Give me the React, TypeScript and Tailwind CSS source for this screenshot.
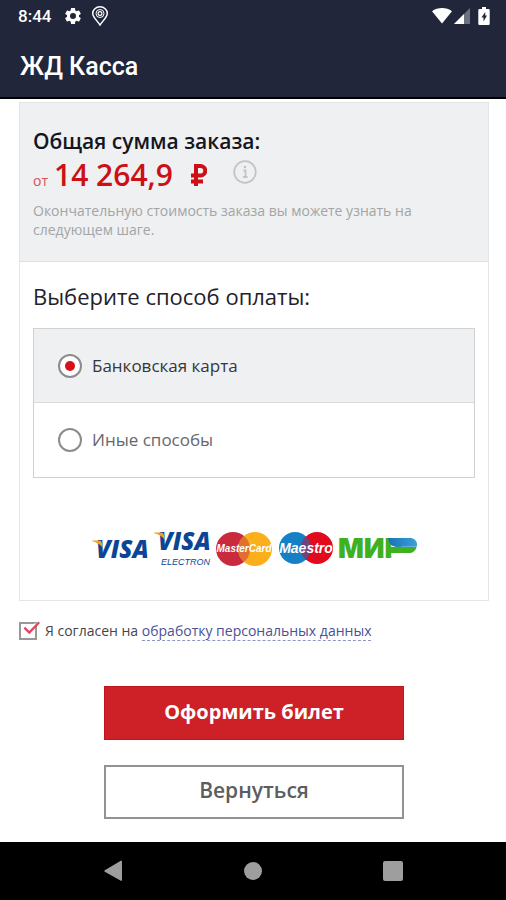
import { useState } from "react";

type PaymentMethod = "card" | "other";

const paymentMethods: Array<{ label: string; value: PaymentMethod }> = [
  { label: "Банковская карта", value: "card" },
  { label: "Иные способы", value: "other" },
];

function StatusBar() {
  return (
    <div className="flex h-8 items-center justify-between pr-4 pl-[18px] text-white">
      <div className="flex items-center">
        <span className="text-[17px] leading-5 font-medium">8:44</span>
        <svg className="ml-3 h-5 w-5" viewBox="0 0 24 24" fill="currentColor">
          <path d="M19.14 12.94c.04-.3.06-.61.06-.94 0-.32-.02-.64-.07-.94l2.03-1.58a.49.49 0 0 0 .12-.61l-1.92-3.32a.488.488 0 0 0-.59-.22l-2.39.96c-.5-.38-1.03-.7-1.62-.94l-.36-2.54a.484.484 0 0 0-.48-.41h-3.84c-.24 0-.43.17-.47.41l-.36 2.54c-.59.24-1.13.57-1.62.94l-2.39-.96c-.22-.08-.47 0-.59.22L2.74 8.87c-.12.21-.08.47.12.61l2.03 1.58c-.05.3-.09.63-.09.94s.02.64.07.94l-2.03 1.58a.49.49 0 0 0-.12.61l1.92 3.32c.12.22.37.29.59.22l2.39-.96c.5.38 1.03.7 1.62.94l.36 2.54c.05.24.24.41.48.41h3.84c.24 0 .44-.17.47-.41l.36-2.54c.59-.24 1.13-.56 1.62-.94l2.39.96c.22.08.47 0 .59-.22l1.92-3.32c.12-.22.07-.47-.12-.61l-2.01-1.58zM12 15.6A3.6 3.6 0 1 1 12 8.4a3.6 3.6 0 0 1 0 7.2z" />
        </svg>
        <svg className="ml-2 h-5 w-[18px]" viewBox="0 0 18 20" fill="none" stroke="currentColor">
          <path d="M9 19C6 14.500 1.700 11 1.700 7.400a7.300 6.600 0 0 1 14.600 0C16.300 11 12 14.500 9 19z" strokeWidth="1.500" />
          <circle cx="9" cy="7.500" r="4" strokeWidth="1" />
          <circle cx="9" cy="7.500" r="1.900" strokeWidth="1.200" />
        </svg>
      </div>

      <div className="flex items-center">
        <svg className="h-4 w-5" viewBox="0 0 20 16" fill="currentColor">
          <path d="M0 3.200C5.500-1 14.500-1 20 3.200L10 15.500z" />
        </svg>
        <svg className="ml-0.5 h-4 w-4" viewBox="0 0 16 16" fill="currentColor">
          <path d="M16 0v16H0z" opacity="0.35" />
          <path d="M10 6v10H0z" />
        </svg>
        <svg className="ml-2 h-[18px] w-3" viewBox="0 0 12 18">
          <path d="M4 0h4v2h2.500a1.200 1.200 0 0 1 1.200 1.200v13.600a1.200 1.200 0 0 1-1.200 1.200h-9A1.200 1.200 0 0 1 .3 16.800V3.200A1.200 1.200 0 0 1 1.500 2H4z" fill="white" />
          <path d="M7.200 5L3.500 10.500h2v4l3.500-6H7.200z" fill="#21263a" />
        </svg>
      </div>
    </div>
  );
}

function InfoIcon() {
  return (
    <svg className="h-6 w-6" viewBox="0 0 24 24" fill="none" stroke="#c3c4c5">
      <circle cx="12" cy="12" r="10.800" strokeWidth="1.800" />
      <path d="M10.500 10.500h2V17M10 17h4.500" strokeWidth="1.800" />
      <circle cx="12" cy="7" r="1.300" fill="#c3c4c5" stroke="none" />
    </svg>
  );
}

function PaymentLogos() {
  return (
    <div className="flex items-center justify-center gap-1.5 pl-1">
      <svg className="h-10 w-14 overflow-visible" viewBox="0 0 56 40" fontFamily="Open Sans, sans-serif" fontStyle="italic">
        <text x="4" y="29" fontSize="24" fontWeight="800" fill="#0b4595">VISA</text>
        <path d="M0 11.500h7c1.800 0 2.500.8 2.800 2.400l1 5C8.500 15.500 5 13.500 0 12z" fill="#f0a21c" />
      </svg>
      <svg className="h-10 w-14 overflow-visible" viewBox="0 0 56 40" fontFamily="Open Sans, sans-serif" fontStyle="italic">
        <text x="4" y="21" fontSize="24" fontWeight="800" fill="#0b4595">VISA</text>
        <path d="M0 3.500h7c1.800 0 2.500.8 2.800 2.400l1 5C8.500 7.500 5 5.500 0 4z" fill="#f0a21c" />
        <text x="7" y="36" fontSize="9" fontFamily="Liberation Sans, sans-serif" fill="#0b4595">ELECTRON</text>
      </svg>
      <svg className="h-10 w-14 overflow-visible" viewBox="0 0 56 40" fontFamily="Liberation Sans, sans-serif">
        <circle cx="17" cy="20" r="17" fill="#c92b3c" />
        <circle cx="39" cy="20" r="17" fill="#fbb01b" />
        <path d="M28 7a17 17 0 0 1 0 26 17 17 0 0 1 0-26z" fill="#e0702c" />
        <text x="28" y="23" textAnchor="middle" fontSize="10" fontWeight="700" fontStyle="italic" fill="white">MasterCard</text>
      </svg>
      <svg className="h-10 w-14 overflow-visible" viewBox="0 0 56 40" fontFamily="Liberation Sans, sans-serif">
        <circle cx="17" cy="19" r="16" fill="#1580c4" />
        <circle cx="39" cy="19" r="16" fill="#e20a1c" />
        <path d="M28 7.400a16 16 0 0 1 0 23.200 16 16 0 0 1 0-23.200z" fill="#6a4582" />
        <text x="28" y="24" textAnchor="middle" fontSize="14" fontWeight="700" fontStyle="italic" fill="white">Maestro</text>
      </svg>
      <svg className="h-10 w-20 overflow-visible" viewBox="0 0 80 40" fontFamily="Inter, sans-serif">
        <defs>
          <linearGradient id="mir" x1="0" x2="1">
            <stop offset="0" stopColor="#1573b8" />
            <stop offset="1" stopColor="#3f9fd8" />
          </linearGradient>
        </defs>
        <text x="-2" y="29" fontSize="27" fontWeight="900" fill="#3fb020">МИР</text>
        <path d="M50 18h26.500c-1 4.200-3.800 6-7.500 6H50z" fill="#3fb020" />
        <path d="M48 9h21.500c4.500 0 7.500 2.500 7.500 6.500 0 .9 0 1.500-.3 2.200H56c-4.500 0-7-3.200-8-8.700z" fill="url(#mir)" />
      </svg>
    </div>
  );
}

function NavigationBar() {
  return (
    <nav className="flex h-[58px] items-center justify-center gap-[100px] bg-black text-[#9e9e9e]">
      <button type="button" aria-label="Назад" className="flex w-10 justify-center">
        <svg className="h-6 w-6" viewBox="0 0 24 24" fill="currentColor">
          <path d="M21 2.500v18.500a.8.800 0 0 1-1.200.700L3.800 12.700a.9.900 0 0 1 0-1.500L19.800 1.800A.8.800 0 0 1 21 2.500z" />
        </svg>
      </button>
      <button type="button" aria-label="Домой" className="flex w-10 justify-center">
        <span className="h-[18px] w-[18px] rounded-full bg-current" />
      </button>
      <button type="button" aria-label="Обзор" className="flex w-10 justify-center">
        <span className="h-5 w-5 rounded-xs bg-current" />
      </button>
    </nav>
  );
}

export default function App() {
  const [method, setMethod] = useState<PaymentMethod>("card");
  const [agreed, setAgreed] = useState(true);

  return (
    <div className="flex min-h-screen flex-col bg-white font-['Open_Sans','Noto_Sans',sans-serif]">
      <header className="border-b-2 border-black bg-[#21263a] font-[Roboto,sans-serif]">
        <StatusBar />
        <h1 className="px-5 pt-5 pb-[15px] text-[25px] leading-[30px] font-medium text-white">ЖД Касса</h1>
      </header>

      <main className="flex-1 pt-[3px] pr-[17px] pl-[19px]">
        <section className="border border-[#e3e5e6]">
          <div className="border-b border-[#dddfe0] bg-[#eef0f1] px-[13px] pt-6 pb-[22px]">
            <h2 className="text-[21px] leading-7 font-semibold text-[#15151f]">Общая сумма заказа:</h2>
            <div className="flex items-center">
              <p className="flex items-baseline leading-10 text-[#cc1016]">
                <span className="text-sm text-[#d9525a]">от</span>
                <span className="ml-1.5 text-[30px] font-semibold">14 264,9</span>
                <svg className="ml-[18px] h-[22px] w-4" viewBox="0 0 16 22" fill="none" stroke="currentColor" strokeWidth="4">
                  <path d="M5 22V2h4.500a4.500 4.500 0 0 1 0 9.500H0M0 17.500h12" />
                </svg>
              </p>
              <button type="button" aria-label="Подробнее" className="mb-1.5 ml-[26px]">
                <InfoIcon />
              </button>
            </div>
            <p className="mt-1.5 text-sm leading-[19px] text-[#a3a5a6]">
              Окончательную стоимость заказа вы можете узнать на следующем шаге.
            </p>
          </div>

          <div className="px-[13px] pt-5 pb-[31px]">
            <h2 className="text-[22px] leading-7 text-[#22222c]">Выберите способ оплаты:</h2>
            <div className="mt-[18px] border border-[#cfd1d2]" role="radiogroup" aria-label="Выберите способ оплаты">
              {paymentMethods.map((item) => (
                <label
                  key={item.value}
                  className={
                    method === item.value
                      ? "flex h-[74px] items-center gap-2.5 border-b border-[#d8dadb] bg-[#eef0f1] px-6 text-[17px] text-[#36363b] last:border-b-0"
                      : "flex h-[74px] items-center gap-2.5 border-b border-[#d8dadb] px-6 text-[17px] text-[#66676a] last:border-b-0"
                  }
                >
                  <input
                    type="radio"
                    name="payment"
                    checked={method === item.value}
                    onChange={() => setMethod(item.value)}
                    className="grid h-6 w-6 appearance-none place-items-center rounded-full border-2 border-[#8b8c8e] bg-white before:h-2.5 before:w-2.5 before:rounded-full before:content-[''] checked:before:bg-[#d9101a]"
                  />
                  {item.label}
                </label>
              ))}
            </div>
            <div className="mt-[51px]">
              <PaymentLogos />
            </div>
          </div>
        </section>

        <div className="mt-5 flex items-center gap-2 text-sm leading-5 text-[#44454a]">
          <span className="relative flex">
            <input
              id="agreement"
              type="checkbox"
              checked={agreed}
              onChange={(event) => setAgreed(event.target.checked)}
              className="h-[18px] w-[18px] appearance-none border-2 border-[#97989a] bg-white"
            />
            {agreed ? (
              <svg className="pointer-events-none absolute -top-0.5 left-1 h-[18px] w-[18px]" viewBox="0 0 20 20" fill="none">
                <path d="M12 4h6v5z" fill="white" />
                <path d="M1.500 8.500l5.500 5.500L18 2.500" stroke="#e2445a" strokeWidth="2.500" />
              </svg>
            ) : null}
          </span>
          <p>
            <label htmlFor="agreement">Я согласен на</label>{" "}
            <a href="#personal-data" className="border-b border-dashed border-[#8f96c4] text-[#4a5196]">
              обработку персональных данных
            </a>
          </p>
        </div>

        <div className="mx-auto mt-[45px] mb-5 flex w-[300px] flex-col gap-[25px] leading-7">
          <button type="button" className="h-[54px] border border-[#c3131a] bg-[#cd2027] pb-0.5 text-xl font-bold text-white">
            Оформить билет
          </button>
          <button type="button" className="h-[54px] border-2 border-[#909294] bg-white pb-1 text-[21px] font-semibold text-[#5c5d5f]">
            Вернуться
          </button>
        </div>
      </main>

      <NavigationBar />
    </div>
  );
}
